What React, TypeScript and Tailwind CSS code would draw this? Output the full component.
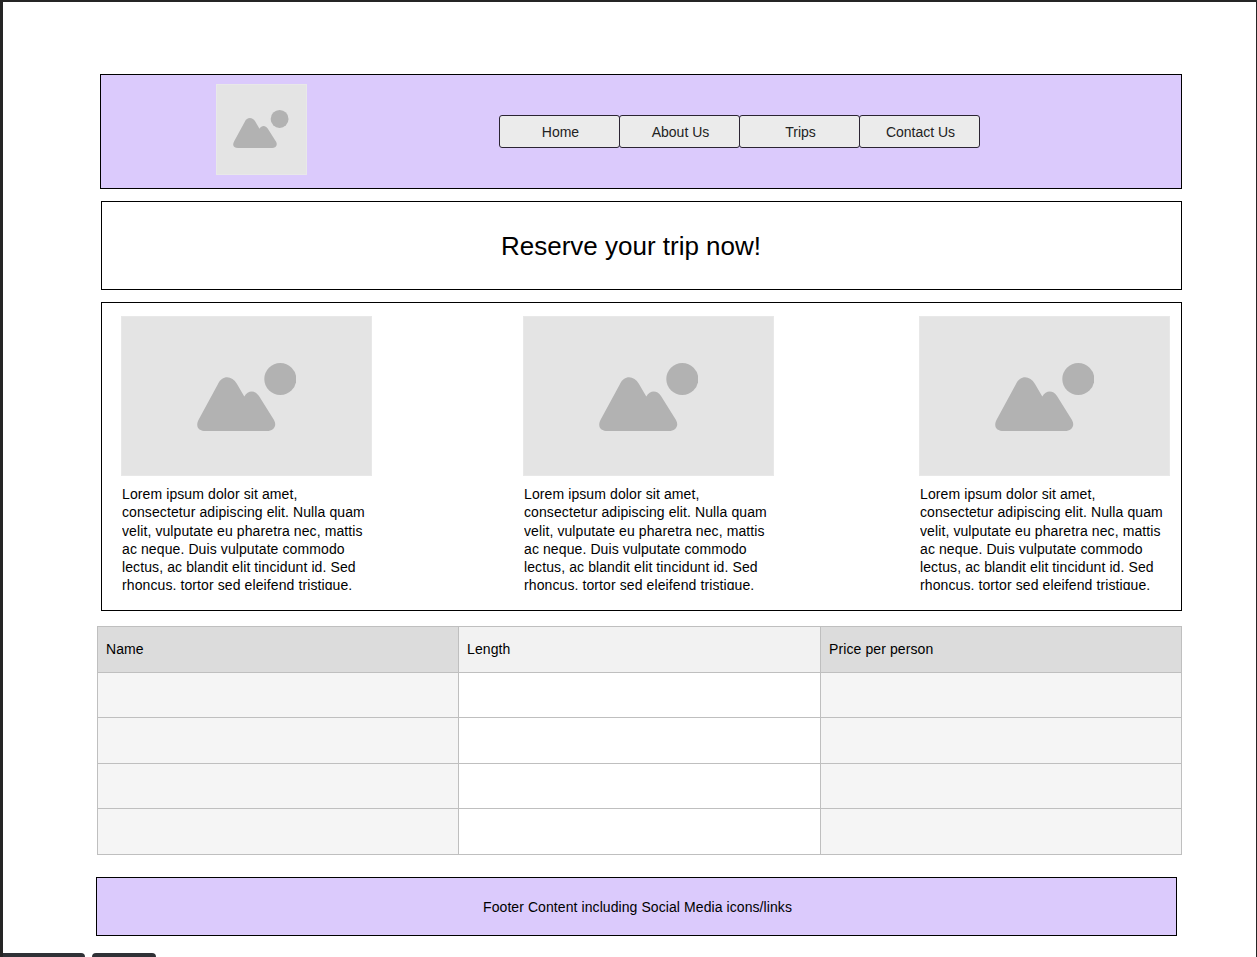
const lorem =
  "Lorem ipsum dolor sit amet, consectetur adipiscing elit. Nulla quam velit, vulputate eu pharetra nec, mattis ac neque. Duis vulputate commodo lectus, ac blandit elit tincidunt id. Sed rhoncus, tortor sed eleifend tristique, tortor mauris molestie elit, et lacinia ipsum quam nec dui."

const navItems = ["Home", "About Us", "Trips", "Contact Us"]

function ImageIcon({ className }: { className: string }) {
  return (
    <svg viewBox="0 0 99.3 68" className={className} fill="#b2b2b2">
      <circle cx="83.3" cy="16" r="16" />
      <path d="M2 56 L21 21 C25 12 35 12 40 21 L47.3 33.5 C51 27 58 27 62 33 L77 57 C80.5 63 76 68 70 68 H9 C1 68 -2 63 2 56 Z" />
    </svg>
  )
}

function Placeholder({ className, iconClass }: { className: string; iconClass: string }) {
  return (
    <div className={`flex items-center justify-center border border-[#e8e8e8] bg-[#e4e4e4] ${className}`}>
      <ImageIcon className={iconClass} />
    </div>
  )
}

function Card({ className }: { className: string }) {
  return (
    <div className={`w-[250px] shrink-0 ${className}`}>
      <Placeholder className="-ml-px h-[160px] w-[251px] pt-px" iconClass="h-[68px] w-[99.3px]" />
      <p className="mt-[9px] h-[105px] w-[246px] overflow-hidden text-[14px] leading-[18.25px] tracking-[0.1px] text-black">{lorem}</p>
    </div>
  )
}

const rowHeights = ["h-[45px]", "h-[46px]", "h-[45px]", "h-[46px]"]

export default function App() {
  return (
    <div className="relative flex h-[957px] w-[1257px] flex-col items-start overflow-hidden border-t-2 border-r border-l-[3px] border-[#252525] bg-white font-['Liberation_Sans',Arial,sans-serif]">
      {/* Header */}
      <header className="mt-[72px] ml-[97px] flex h-[115px] w-[1082px] items-center border border-black bg-[#dbcafc]">
        <Placeholder className="mb-[4px] ml-[115px] h-[91px] w-[91px] pr-px pb-px" iconClass="h-[38px] w-[55.6px]" />
        <nav className="ml-[192px] flex">
          {navItems.map((item) => (
            <button
              key={item}
              className="-mr-px h-[33px] w-[121px] rounded-[3px] border border-[#2b2433] bg-[#ebebeb] pt-0.5 pl-0.5 text-[14px] text-[#222]"
            >
              {item}
            </button>
          ))}
        </nav>
      </header>

      {/* Title */}
      <div className="mt-3 ml-[98px] flex h-[89px] w-[1081px] items-center justify-center border border-black pt-0.5 pr-[21px] text-[26px] text-black">
        Reserve your trip now!
      </div>

      {/* Cards */}
      <section className="mt-3 ml-[98px] flex h-[309px] w-[1081px] border border-black pt-[13px] pl-5">
        <Card className="" />
        <Card className="ml-[152px]" />
        <Card className="ml-[146px]" />
      </section>

      {/* Table */}
      <table className="mt-[15px] ml-[94px] w-[1085px] table-fixed border-collapse text-[14px] tracking-[0.1px] text-black">
        <thead>
          <tr className="h-[46px]">
            <th className="w-[361px] border border-[#bfbfbf] bg-[#dcdcdc] px-2 text-left font-normal">Name</th>
            <th className="w-[362px] border border-[#bfbfbf] bg-[#f2f2f2] px-2 text-left font-normal">Length</th>
            <th className="border border-[#bfbfbf] bg-[#dcdcdc] px-2 text-left font-normal">Price per person</th>
          </tr>
        </thead>
        <tbody>
          {rowHeights.map((height, i) => (
            <tr key={i} className={height}>
              <td className="border border-[#bfbfbf] bg-[#f5f5f5]"></td>
              <td className="border border-[#bfbfbf] bg-white"></td>
              <td className="border border-[#bfbfbf] bg-[#f5f5f5]"></td>
            </tr>
          ))}
        </tbody>
      </table>

      {/* Footer */}
      <footer className="mt-[22px] ml-[93px] flex h-[59px] w-[1081px] items-center justify-center border border-black bg-[#dbcafc] pt-0.5 pl-0.5 text-[14px] tracking-[0.08px] text-black">
        Footer Content including Social Media icons/links
      </footer>

      {/* Browser tabs peeking in at the bottom edge */}
      <div className="absolute bottom-0 -left-[3px] h-1 w-[85px] rounded-t-md bg-[#2f3136]"></div>
      <div className="absolute bottom-0 left-[89px] h-1 w-[64px] rounded-t-md bg-[#2f3136]"></div>
    </div>
  )
}
